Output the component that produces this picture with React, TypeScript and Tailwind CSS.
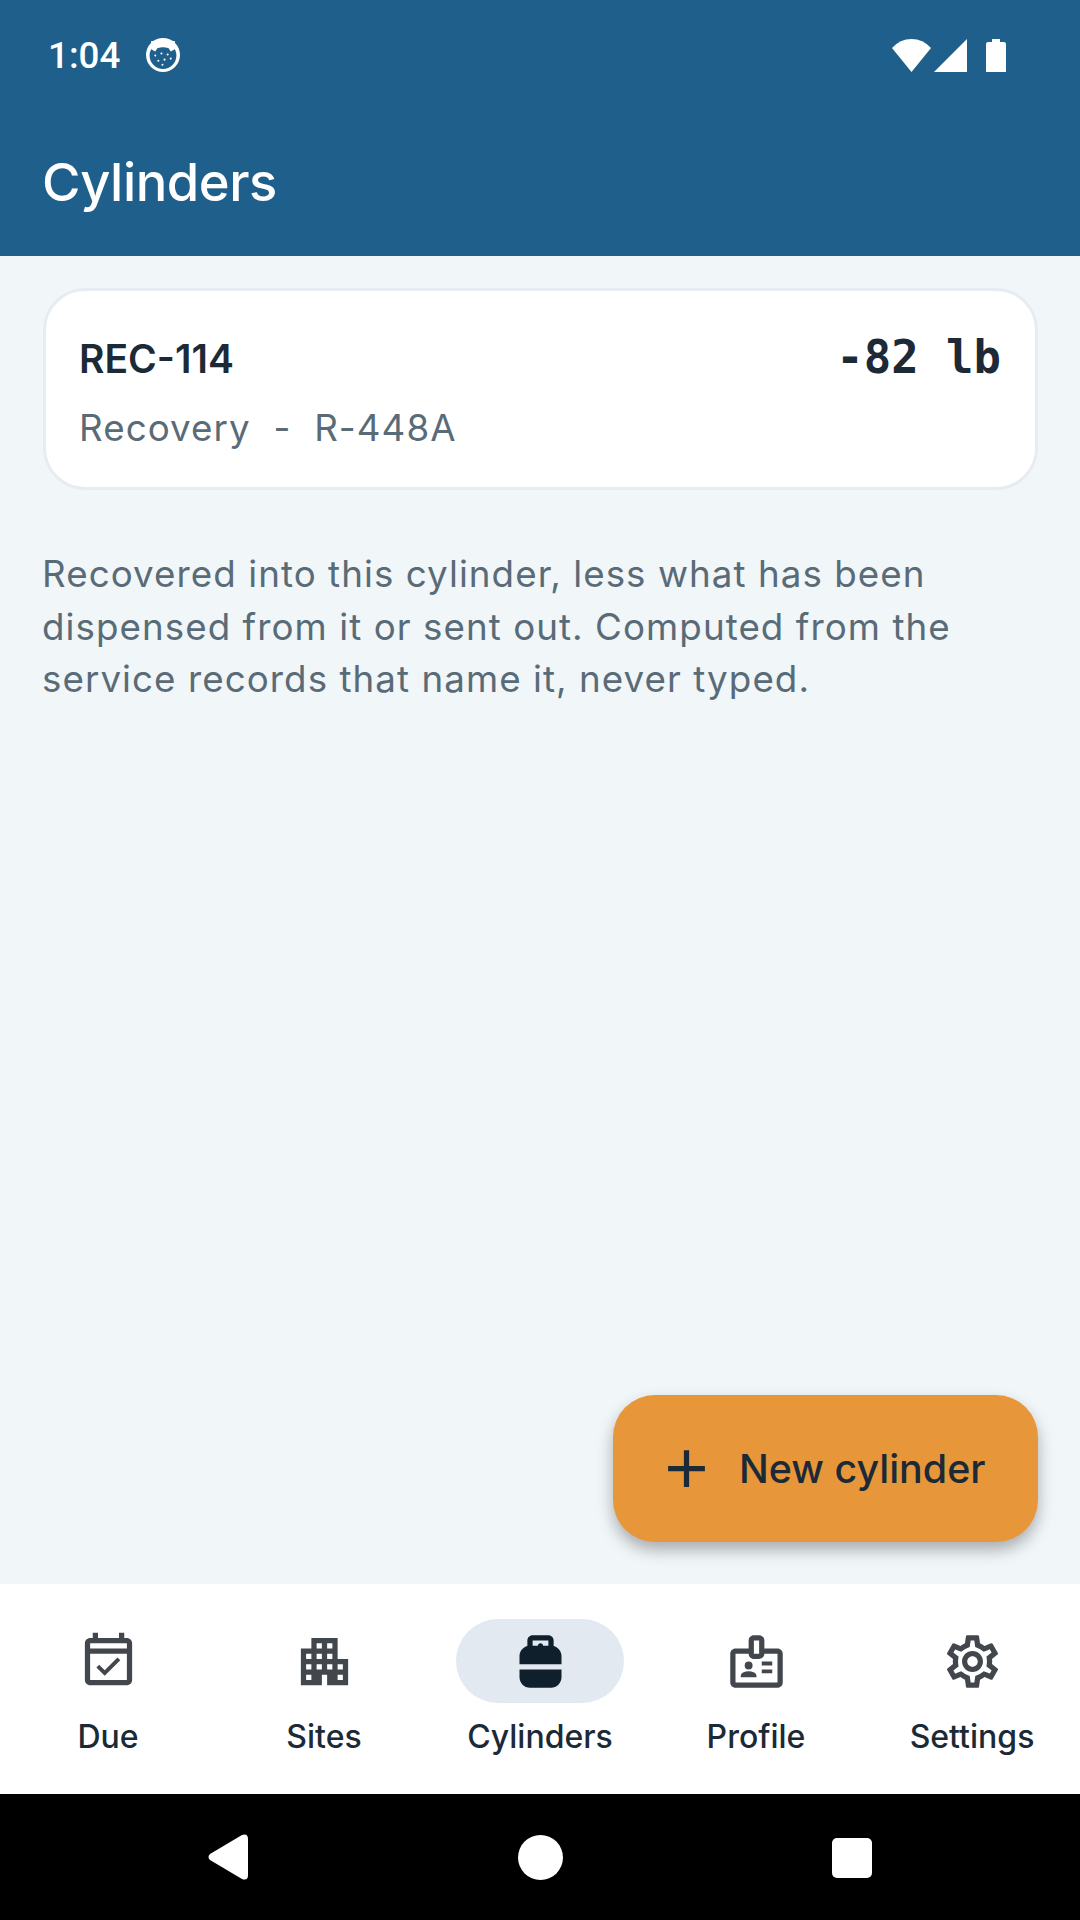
import { MdAdd, MdApartment, MdOutlineBadge, MdOutlineEventAvailable, MdOutlineSettings, MdPropaneTank } from 'react-icons/md';

const tabs = [
  { label: 'Due', icon: MdOutlineEventAvailable },
  { label: 'Sites', icon: MdApartment },
  { label: 'Cylinders', icon: MdPropaneTank, active: true },
  { label: 'Profile', icon: MdOutlineBadge },
  { label: 'Settings', icon: MdOutlineSettings },
];

// Small notification glyph next to the clock
function NotificationDot() {
  return (
    <svg width="34" height="34" viewBox="0 0 33 33">
      <circle cx="16.5" cy="16.5" r="16.5" fill="#fff" />
      <circle cx="16.5" cy="17" r="13" fill="#1f5f8b" />
      <path d="M5 3 L28 3 L28 11 L24 13 L22 10 Q16.5 8 11 10 L9 13 L5 11 Z" fill="#fff" />
      <g fill="#fff">
        <circle cx="9" cy="17" r="1" />
        <circle cx="15" cy="15" r="1" />
        <circle cx="21" cy="16" r="1" />
        <circle cx="12" cy="22" r="1" />
        <circle cx="18" cy="21" r="1" />
        <circle cx="24" cy="20" r="1" />
        <circle cx="16" cy="26" r="1" />
      </g>
    </svg>
  );
}

function StatusBar() {
  return (
    <div className="flex h-[110px] items-center justify-between pl-[48px] pr-[74px]">
      <div className="flex items-center gap-[26px]">
        <span className="mt-[2px] font-['Roboto',sans-serif] text-[36.75px] leading-none font-medium text-white">1:04</span>
        <NotificationDot />
      </div>
      <div className="flex items-center">
        <svg width="39" height="33" viewBox="0 0 39 33" fill="#fff">
          <path d="M19.5 33 L0 9 Q8 0 19.5 0 Q31 0 39 9 Z" />
        </svg>
        <svg className="ml-[3px]" width="33" height="33" viewBox="0 0 33 33" fill="#fff">
          <path d="M33 0 V33 H0 Z" />
        </svg>
        <svg className="ml-[19px]" width="20" height="33" viewBox="0 0 20 33" fill="#fff">
          <path d="M6 0 H14 V3 H18 Q20 3 20 5 V33 H0 V5 Q0 3 2 3 H6 Z" />
        </svg>
      </div>
    </div>
  );
}

function BottomNav() {
  return (
    <nav className="grid h-[210px] grid-cols-5 bg-white pt-[35px]">
      {tabs.map(({ label, icon: Icon, active }) => (
        <div key={label} className="flex flex-col items-center">
          <div className={`flex h-[84px] w-[168px] items-center justify-center rounded-full ${active ? 'bg-[#e2e9f0]' : ''}`}>
            <Icon size={63} className={active ? 'text-[#0f1f2c]' : 'text-[#42474e]'} />
          </div>
          <span className="mt-[13px] text-[32px] leading-[42px] font-medium text-[#1b2a36]">{label}</span>
        </div>
      ))}
    </nav>
  );
}

export default function App() {
  return (
    <div className="flex h-[1920px] w-[1080px] flex-col overflow-hidden bg-[#f1f6f9] font-['Inter',sans-serif]">
      <header className="h-[256px] bg-[#1f5f8b]">
        <StatusBar />
        <h1 className="mt-[36px] pl-[42px] text-[52.5px] leading-[72px] font-medium tracking-[-0.45px] text-white">Cylinders</h1>
      </header>

      <main className="relative flex-1 pt-[32px] pr-[42px] pl-[43px]">
        <div className="flex items-start justify-between rounded-[42px] border-[3px] border-[#e6ecf1] bg-white pt-[42px] pr-[34px] pb-[35px] pl-[33px]">
          <div>
            <div className="text-[39px] leading-[52px] font-semibold text-[#1b2a36]">REC-114</div>
            <div className="mt-[19px] text-[36.75px] leading-[48px] tracking-[1.05px] whitespace-pre text-[#5a6b78]">Recovery  -  R-448A</div>
          </div>
          <div className="-mt-[1px] font-['DejaVu_Sans_Mono',monospace] text-[45.6px] leading-[52px] font-bold text-[#1b2a36]">-82 lb</div>
        </div>

        <p className="mt-[58px] -ml-[1px] text-[36.75px] leading-[52.5px] tracking-[1.05px] text-[#5a6b78]">
          Recovered into this cylinder, less what has been dispensed from it or sent out. Computed from the service records that name it, never typed.
        </p>

        {/* Extended action button floating over the list */}
        <button className="absolute top-[1139px] left-[613px] flex h-[147px] w-[425px] items-center rounded-[42px] bg-[#e8963a] pl-[42px] shadow-[0_8px_16px_rgba(0,0,0,0.3)]">
          <MdAdd size={63} className="text-[#1b2a36]" />
          <span className="mt-[2px] ml-[21px] text-[39.4px] font-medium text-[#1b2a36]">New cylinder</span>
        </button>
      </main>

      <BottomNav />

      {/* Android navigation buttons */}
      <div className="relative h-[126px] bg-black">
        <svg className="absolute top-[40px] left-[208px]" width="42" height="46" viewBox="0 0 42 46" fill="#fff">
          <path d="M2 20 L34 1 Q40 -1 40 5 V41 Q40 47 34 45 L2 26 Q-1 23 2 20 Z" />
        </svg>
        <div className="absolute top-[41px] left-[518px] h-[45px] w-[45px] rounded-full bg-white" />
        <div className="absolute top-[44px] left-[832px] h-[40px] w-[40px] rounded-[5px] bg-white" />
      </div>
    </div>
  );
}
